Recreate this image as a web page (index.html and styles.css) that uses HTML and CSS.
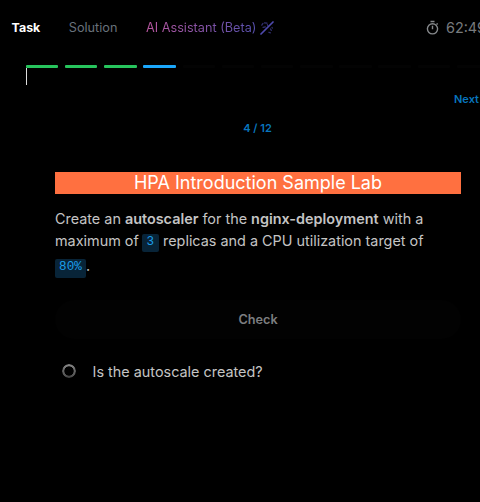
FILE: index.html
```html
<!DOCTYPE html>
<html lang="en">
<head>
<meta charset="utf-8">
<title>HPA Introduction Sample Lab</title>
<link rel="stylesheet" href="styles.css">
</head>
<body>
<header class="tabs">
  <span class="tab active">Task</span>
  <span class="tab solution">Solution</span>
  <span class="tab assistant">AI Assistant (Beta)</span>
  <svg class="wand" viewBox="0 0 14 14" fill="none" stroke="#4f49ad" stroke-linecap="round">
    <path d="M1 13 13 1" stroke-width="1.7"/>
    <path d="M1.8 4.2 3 2.4M4.5 1.8 7 2.2M3 6.4l2.4-.6M7.4 3.6l.4 1M10.5 8l.8 1.4M8.8 11.3l1.6.6M12 6.5l.4.6" stroke-width="1.2" opacity=".65"/>
  </svg>
  <span class="timer">
    <svg class="watch" viewBox="0 0 14 16" fill="none" stroke="#85888b" stroke-width="1.4">
      <circle cx="6.5" cy="8.8" r="5.1"/>
      <path d="M4.5 1.5h4M6.5 5.8v3.4M10.5 4.6l1.2-1.2"/>
    </svg>
    <span>62:49</span>
  </span>
</header>
<div class="progress">
  <i class="step done"></i><i class="step done"></i><i class="step done"></i><i class="step current"></i>
  <i class="step"></i><i class="step"></i><i class="step"></i><i class="step"></i>
  <i class="step"></i><i class="step"></i><i class="step"></i><i class="step"></i>
</div>
<div class="marker"></div>
<div class="next">Next</div>
<div class="count">4 / 12</div>
<main class="task">
  <h1>HPA Introduction Sample Lab</h1>
  <div class="copy">
    <div class="line">Create an <b>autoscaler</b> for the <b>nginx-deployment</b> with a</div>
    <div class="line">maximum of <code>3</code> replicas and a CPU utilization target of</div>
    <div class="line last"><code>80%</code>.</div>
  </div>
  <button class="check">Check</button>
  <div class="status"><span class="spinner"></span><span>Is the autoscale created?</span></div>
</main>
</body>
</html>
```
FILE: styles.css
```css
* { box-sizing: border-box; }
body {
  margin: 0;
  height: 502px;
  overflow: hidden;
  background: #000;
  color: #c4c4c4;
  font-family: Inter, "Liberation Sans", sans-serif;
}
.tabs {
  display: flex;
  align-items: center;
  height: 55px;
  padding-left: 11.6px;
  font-size: 12.7px;
  white-space: nowrap;
}
.tab { flex: none; }
.active { width: 57.2px; color: #fff; font-size: 12.4px; font-weight: 700; }
.solution { width: 77.2px; color: #68717b; }
.assistant {
  width: 110px;
  background: linear-gradient(90deg, #b8569f, #5650ad);
  background-clip: text;
  color: transparent;
}
.wand { flex: none; width: 14px; height: 14px; margin-left: 4px; }
.timer {
  display: flex;
  flex: none;
  align-items: center;
  gap: 6px;
  margin-left: 152px;
  color: #777a7d;
  font-size: 14.4px;
}
.watch { width: 14px; height: 16px; }
.progress { display: flex; gap: 6.7px; padding: 10px 0 0 25.8px; }
.step { flex: none; width: 32.5px; height: 3px; border-radius: 1px; background: #030303; }
.done { background: #27c45d; }
.current { background: #1ba7fb; }
.marker { width: 1px; height: 17px; margin-left: 26px; background: #ddd; }
.next, .count { color: #0875be; font-size: 11px; font-weight: 600; line-height: 14px; }
.next { margin: 7px 0 0 454px; }
.count { margin-top: 15px; padding-left: 35px; text-align: center; }
.task { margin: 37px 19px 0 55px; }
h1 {
  height: 22px;
  margin: 0;
  background: #ff7040;
  color: #fff;
  font-size: 18px;
  font-weight: 400;
  line-height: 22px;
  text-align: center;
}
.copy { margin-top: 14px; font-size: 14.4px; }
.line { height: 22px; line-height: 22px; white-space: nowrap; }
.last { height: 26px; padding-top: 3px; }
b { font-weight: 600; }
code {
  position: relative;
  top: -1px;
  display: inline-block;
  height: 18px;
  margin-left: -1px;
  padding: 0 4.8px;
  border-radius: 2px;
  background: #082438;
  color: #1b9eea;
  font: 12.6px/16px "Liberation Mono", monospace;
}
.last code { height: 19px; margin-left: 0; padding: 0 4.1px; }
.check {
  display: block;
  width: 100%;
  height: 39px;
  margin-top: 22px;
  border: 0;
  border-radius: 20px;
  background: #020202;
  color: #7c7e80;
  font: 600 12.7px/16px Inter, sans-serif;
}
.status { display: flex; align-items: center; gap: 16.6px; height: 20px; margin: 22px 0 0 7px; font-size: 14.4px; }
.spinner {
  width: 14px;
  height: 14px;
  border-radius: 50%;
  background: conic-gradient(#888, #444 50%, #666 75%, #888);
  -webkit-mask: radial-gradient(circle, transparent 4.3px, #000 5px);
  mask: radial-gradient(circle, transparent 4.3px, #000 5px);
}
```
